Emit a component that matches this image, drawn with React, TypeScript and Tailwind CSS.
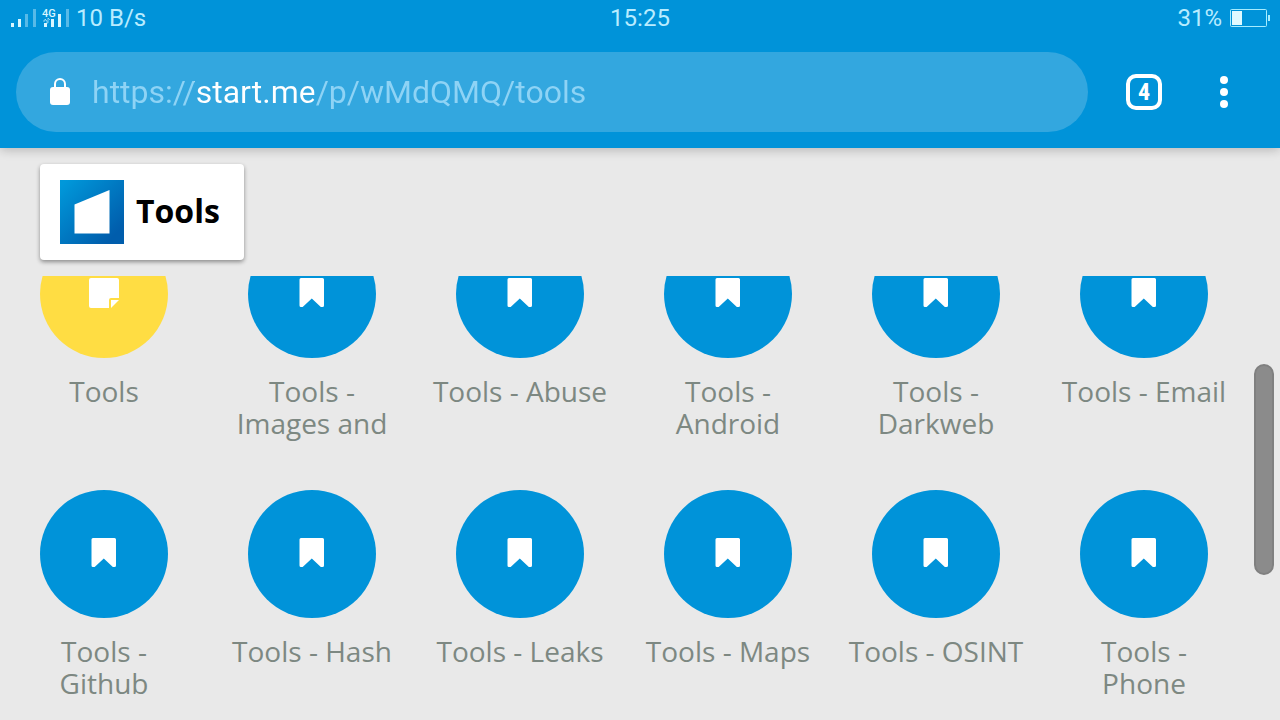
import { useState } from "react";

type Page = { name: string; kind: "bookmark" | "note" };

const pages: Page[] = [
  { name: "Tools", kind: "note" },
  { name: "Tools - Images and", kind: "bookmark" },
  { name: "Tools - Abuse", kind: "bookmark" },
  { name: "Tools - Android", kind: "bookmark" },
  { name: "Tools - Darkweb", kind: "bookmark" },
  { name: "Tools - Email", kind: "bookmark" },
  { name: "Tools - Github", kind: "bookmark" },
  { name: "Tools - Hash", kind: "bookmark" },
  { name: "Tools - Leaks", kind: "bookmark" },
  { name: "Tools - Maps", kind: "bookmark" },
  { name: "Tools - OSINT", kind: "bookmark" },
  { name: "Tools - Phone", kind: "bookmark" },
];

function SignalIcons() {
  return (
    <svg width="60" height="20" viewBox="0 0 60 20" fill="#d9f6ff" aria-hidden="true">
      <rect x="1" y="15" width="3" height="4" />
      <rect x="8" y="11" width="3" height="8" />
      <rect x="15" y="6" width="3" height="13" opacity="0.4" />
      <rect x="23" y="1" width="3" height="18" opacity="0.4" />
      <text x="32" y="9" fontSize="11" fontWeight="500" fontFamily="Roboto, sans-serif">4G</text>
      <path d="M33 13h2v-2l2 2v3M38 15v-5l2 2" fill="none" stroke="#d9f6ff" opacity="0.6" />
      <rect x="34" y="15" width="3" height="4" />
      <rect x="41" y="11" width="3" height="8" />
      <rect x="48" y="6" width="3" height="13" />
      <rect x="56" y="1" width="3" height="18" opacity="0.4" />
    </svg>
  );
}

function BatteryIcon() {
  return (
    <svg width="40" height="20" viewBox="0 0 40 20" aria-hidden="true">
      <rect x="0.5" y="1.5" width="36" height="17" rx="1" fill="none" stroke="#a6ecff" />
      <rect x="2" y="3" width="10" height="14" fill="#e0faff" />
      <rect x="38" y="7" width="2" height="6" fill="#a6ecff" />
    </svg>
  );
}

function StatusBar() {
  return (
    <div className="grid h-9 grid-cols-3 items-center px-2.5 text-2xl leading-9 text-[#b8ecff]">
      <div className="flex items-center gap-1.5">
        <SignalIcons />
        <span>10 B/s</span>
      </div>
      <div className="text-center">15:25</div>
      <div className="flex items-center justify-end gap-2">
        <span>31%</span>
        <BatteryIcon />
      </div>
    </div>
  );
}

function Toolbar() {
  const [url, setUrl] = useState("https://start.me/p/wMdQMQ/tools");
  return (
    <div className="flex items-center gap-4 p-4">
      <div className="flex h-20 flex-1 items-center rounded-full bg-[#33a7df] pr-8 pl-8">
        <svg width="24" height="32" viewBox="0 0 24 32" className="shrink-0" aria-hidden="true">
          <rect x="2" y="11" width="20" height="18" rx="3" fill="#fff" />
          <path d="M7 12V8a5 5 0 0 1 10 0v4" fill="none" stroke="#fff" strokeWidth="2" />
        </svg>
        <input
          type="text"
          aria-label="Web address"
          value={url}
          onChange={(event) => setUrl(event.target.value)}
          spellCheck={false}
          className="ml-5 h-12 min-w-0 flex-1 bg-[linear-gradient(90deg,#8ed3f5_102px,#fff_102px,#fff_222px,#8ed3f5_222px)] bg-clip-text text-[32px] leading-[48px] text-transparent caret-white outline-none"
        />
      </div>
      <div className="flex">
        <button type="button" aria-label="4 open tabs" className="flex h-20 w-20 items-center justify-center">
          <span className="flex h-9 w-9 items-center justify-center rounded-[10px] border-4 border-white font-['Roboto_Condensed',Roboto,sans-serif] text-2xl leading-7 font-bold text-white">4</span>
        </button>
        <button type="button" aria-label="Menu" className="flex h-20 w-20 flex-col items-center justify-center gap-1">
          <span className="h-2 w-2 rounded-full bg-white" />
          <span className="h-2 w-2 rounded-full bg-white" />
          <span className="h-2 w-2 rounded-full bg-white" />
        </button>
      </div>
    </div>
  );
}

function BookmarkIcon() {
  return (
    <svg width="32" height="32" viewBox="0 0 32 32" fill="#fff" aria-hidden="true">
      <path d="M5 0H26.500Q28 0 28 1.500V27.500Q28 29 26.500 29H25.500Q24.800 29 24.300 28.500L15.800 20.500L7.200 28.500Q6.700 29 6 29H5Q3.500 29 3.500 27.500V1.500Q3.500 0 5 0Z" />
    </svg>
  );
}

function NoteIcon() {
  return (
    <svg width="32" height="32" viewBox="0 0 32 32" fill="#fff" aria-hidden="true">
      <path d="M3 0H29Q31 0 31 2V20H23Q21 20 21 22V30H3Q1 30 1 28V2Q1 0 3 0Z" />
      <path d="M23 22H31L23 30Z" />
    </svg>
  );
}

function Tile({ page }: { page: Page }) {
  return (
    <li>
      <a href="#page" className="flex flex-col items-center px-4 text-center">
        <span
          className={
            page.kind === "note"
              ? "flex h-32 w-32 items-center justify-center rounded-full bg-[#ffdd43]"
              : "flex h-32 w-32 items-center justify-center rounded-full bg-[#0093d9]"
          }
        >
          {page.kind === "note" ? <NoteIcon /> : <BookmarkIcon />}
        </span>
        <span className="mt-[17px] h-16 text-[28px] leading-8 text-[#7d8882]">{page.name}</span>
      </a>
    </li>
  );
}

export default function App() {
  return (
    <div className="flex h-dvh flex-col overflow-hidden bg-[#e9e9e9] font-['Open_Sans',sans-serif]">
      <header className="z-10 bg-[#0093d9] font-[Roboto,sans-serif] shadow-[0_2px_10px_rgba(0,0,0,0.22)]">
        <StatusBar />
        <Toolbar />
      </header>
      <nav className="flex px-10 py-4">
        <a href="#tools" className="flex items-center gap-3 rounded-sm bg-white py-4 pr-6 pl-5 shadow-[0_2px_4px_rgba(0,0,0,0.4)]">
          <svg width="64" height="64" viewBox="0 0 64 64" aria-hidden="true">
            <defs>
              <linearGradient id="logo" x1="0" y1="0" x2="1" y2="1">
                <stop offset="0.05" stopColor="#0098da" />
                <stop offset="0.85" stopColor="#005dac" />
              </linearGradient>
            </defs>
            <rect width="64" height="64" fill="url(#logo)" />
            <path d="M14.500 24.500L49.500 10V53.500H14.500Z" fill="#fff" />
          </svg>
          <span className="pb-0.5 text-[32px] leading-10 font-bold text-black">Tools</span>
        </a>
      </nav>
      <main className="flex min-h-0 flex-1 overflow-hidden">
        <ul className="-mt-[46px] grid flex-1 grid-cols-6 content-start gap-y-[51px]">
          {pages.map((page) => (
            <Tile key={page.name} page={page} />
          ))}
        </ul>
        <div className="flex w-8 justify-center pt-[88px]" aria-hidden="true">
          <div className="h-[211px] w-5 rounded-full border-2 border-[#808080] bg-[#8b8b8b]" />
        </div>
      </main>
    </div>
  );
}
